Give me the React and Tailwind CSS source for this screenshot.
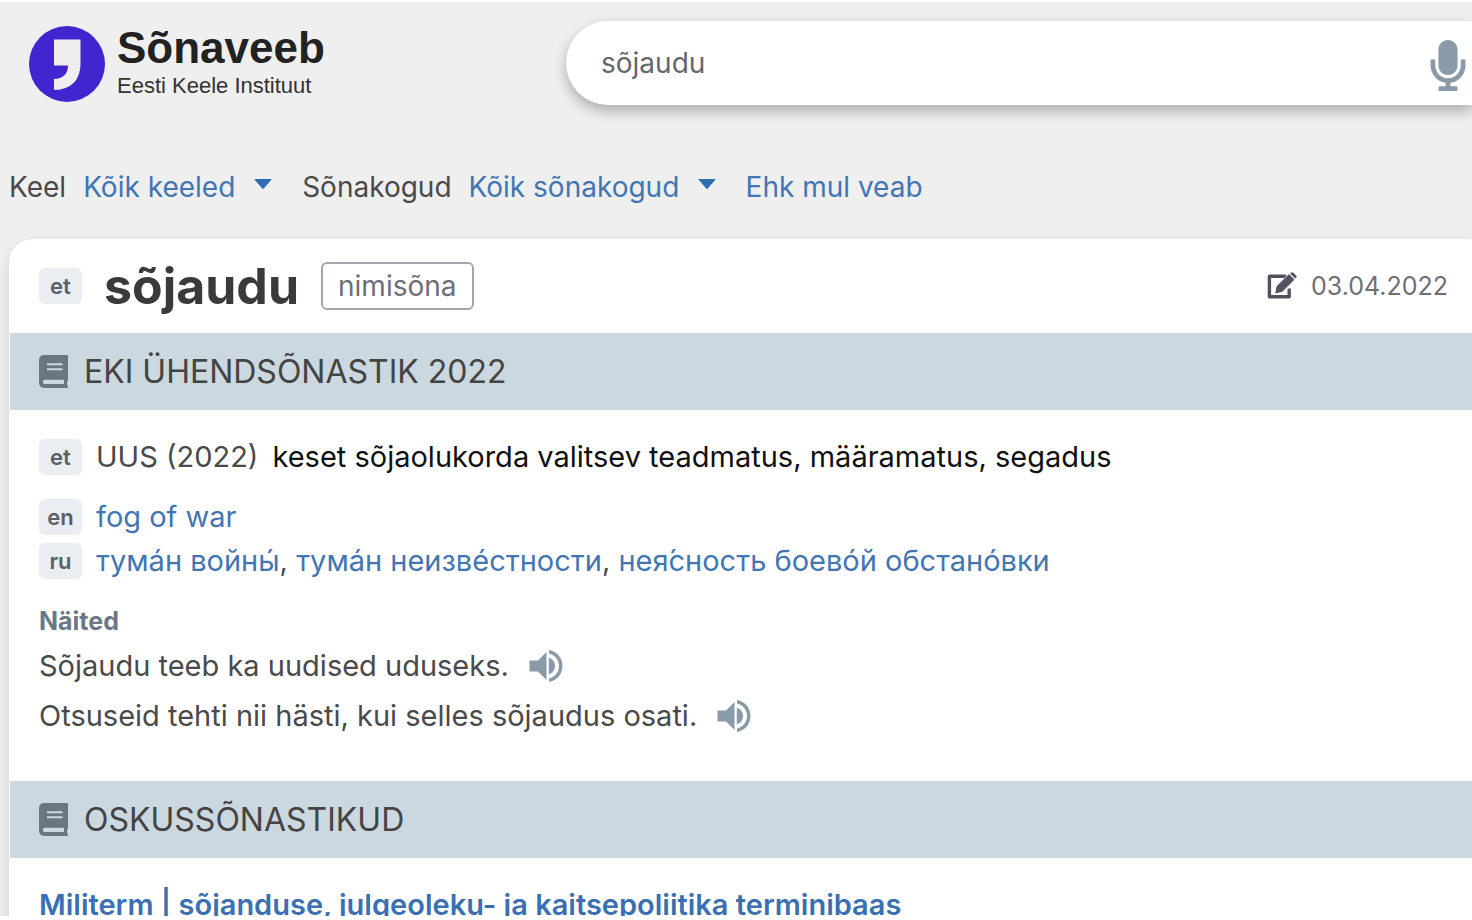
import { FaMicrophone } from "react-icons/fa";

function LangTag({ children }) {
  return (
    <span className="flex h-9 min-w-[43px] shrink-0 items-center justify-center rounded-md bg-[#eaedf1] px-2 text-[22px] leading-8 font-semibold text-[#5b5f68]">
      {children}
    </span>
  );
}

function Filter({ id, label, value }) {
  return (
    <div className="flex items-center gap-[17px]">
      <label htmlFor={id}>{label}</label>
      <div className="relative flex items-center">
        <select id={id} className="cursor-pointer appearance-none bg-transparent pr-9 text-[#4276b3]">
          <option>{value}</option>
        </select>
        <svg viewBox="0 0 18 10" className="pointer-events-none absolute top-3 right-0 h-[10px] w-[18px] fill-[#2f6db3]" aria-hidden="true">
          <path d="M1 0h16q1 0 .3.8L10 9.2q-1 1-2 0L.7.8Q0 0 1 0z" />
        </svg>
      </div>
    </div>
  );
}

function Band({ title }) {
  return (
    <div className="flex h-[77px] items-center gap-4 bg-[#ccd8e0] pl-[29px]">
      <svg viewBox="0 0 29 33" className="h-[33px] w-[29px]" aria-hidden="true">
        <path fill="#6a7680" d="M5.500 0H28q1 0 1 1v24.500q0 .8-.8 1.200-.5 1.800 0 3.600.8.400.8 1.200 0 1.500-1 1.500H6q-6 0-6-6V5.500Q0 0 5.500 0z" />
        <path fill="#ccd8e0" d="M8 8.200h15.500v2H8zM8 13.200h15.500v2H8zM6 24.700h19v4.300H6q-2.200 0-2.200-2.100T6 24.700z" />
      </svg>
      <h2 className="text-[32px] leading-10 font-normal text-[#444]">{title}</h2>
    </div>
  );
}

function Example({ text }) {
  return (
    <li className="flex h-[50px] items-center gap-5">
      <span>{text}</span>
      <button type="button" aria-label="Kuula" className="text-[#8a9aa9]">
        <svg viewBox="0 0 34 34" className="size-[34px] fill-current" aria-hidden="true">
          <path d="M.5 11.500h8.500L17.500 3v28L9 22.500H.5z" />
          <path d="M19.800 8.500c4 1.500 6.200 4.700 6.200 8.500s-2.200 7-6.200 8.500z" />
          <path d="M20 1c8 1.500 13.500 8 13.500 16S28 31.500 20 33v-3.500c6-1.500 10-6.500 10-12.500S26 6 20 4.500z" />
        </svg>
      </button>
    </li>
  );
}

function Link({ children }) {
  return <a href="#" className="text-[#4276b3]">{children}</a>;
}

export default function App() {
  return (
    <div className="flex h-screen flex-col overflow-hidden border-t-2 border-b-4 border-white bg-[#efefef] font-['Inter',sans-serif] text-[28px] leading-10 text-[#4a4a4a]">
      <header className="flex shrink-0 items-center pt-[19px] pl-[29px]">
        <a href="#" className="flex w-[537px] shrink-0 items-center gap-3 pt-[2px]">
          <svg viewBox="0 0 76 76" className="size-[76px] shrink-0" aria-hidden="true">
            <circle cx="38" cy="38" r="38" fill="#4325cf" />
            <path fill="#efefef" d="M25 13.500h26.500V37c0 17-9 26.500-26.500 27V53c9-.5 14-5 14-13.500H25z" />
          </svg>
          <span className="flex flex-col font-['Liberation_Sans',sans-serif]">
            <span className="text-[44px] leading-11 font-bold text-[#222]">Sõnaveeb</span>
            <span className="text-[22px] leading-8 text-[#333]">Eesti Keele Instituut</span>
          </span>
        </a>
        <form className="flex h-[84px] min-w-0 flex-1 items-center rounded-l-full bg-white pr-[6px] pl-[35px] shadow-[0_6px_14px_rgba(0,0,0,0.28)]">
          <input type="text" aria-label="Otsi" defaultValue="sõjaudu" className="min-w-0 flex-1 bg-transparent text-[#63676d] outline-none" />
          <button type="button" aria-label="Häälotsing" className="pt-1 text-[#8a9aa9]">
            <FaMicrophone className="h-[51px] w-[36px]" />
          </button>
        </form>
      </header>

      <nav className="mt-[62px] flex shrink-0 items-center gap-[30px] pl-[9px]">
        <Filter id="keel" label="Keel" value="Kõik keeled" />
        <Filter id="kogud" label="Sõnakogud" value="Kõik sõnakogud" />
        <Link>Ehk mul veab</Link>
      </nav>

      <main className="mt-8 ml-[9px] flex-1 rounded-tl-3xl bg-white pl-px shadow-[0_4px_12px_rgba(0,0,0,0.13)]">
        <div className="flex h-[94px] items-center pr-6 pl-[29px]">
          <LangTag>et</LangTag>
          <h1 className="ml-[22px] text-[50px] leading-[60px] font-bold text-[#3a3a3a]">sõjaudu</h1>
          <span className="ml-[22px] flex h-12 items-center rounded-md border-2 border-[#a3a7ad] px-[15px] text-[#6c6f78]">nimisõna</span>
          <svg viewBox="0 0 30 28" className="ml-auto h-7 w-[30px]" aria-hidden="true">
            <path d="M19 4.200H2.400v20.500h19.800V16.500" fill="none" stroke="#50535f" strokeWidth="3.400" strokeLinejoin="round" />
            <path d="M13.500 12L22 3.300l5 4.700-10.500 10.500z" fill="none" stroke="#fff" strokeWidth="3" />
            <path d="M8.800 20.800l1.400-6.600L22 2.600l5 5L15.200 19.300z" fill="#50535f" stroke="#50535f" strokeLinejoin="round" />
            <path d="M23.200 1.500l.8-.8q1.200-1 2.400 0l2.700 2.700q1 1.200 0 2.300l-.9.900z" fill="#50535f" />
          </svg>
          <time dateTime="2022-04-03" className="ml-[14px] text-[25px] text-[#6c6f78]">03.04.2022</time>
        </div>

        <Band title="EKI ÜHENDSÕNASTIK 2022" />
        <section className="px-[29px] pt-[27px] pb-10 text-[29px]">
          <p className="flex items-center gap-[14px]">
            <LangTag>et</LangTag>
            <span>UUS (2022)</span>
            <span className="text-[#111]">keset sõjaolukorda valitsev teadmatus, määramatus, segadus</span>
          </p>
          <div className="mt-5 flex flex-col gap-1">
            <p className="flex items-center gap-[14px]">
              <LangTag>en</LangTag>
              <Link>fog of war</Link>
            </p>
            <p className="flex items-center gap-[14px]">
              <LangTag>ru</LangTag>
              <span>
                <Link>тума́н войны́</Link>, <Link>тума́н неизве́стности</Link>, <Link>нея́сность боево́й обстано́вки</Link>
              </span>
            </p>
          </div>
          <h3 className="mt-5 text-[25px] font-bold text-[#6a7885]">Näited</h3>
          <ul>
            <Example text="Sõjaudu teeb ka uudised uduseks." />
            <Example text="Otsuseid tehti nii hästi, kui selles sõjaudus osati." />
          </ul>
        </section>

        <Band title="OSKUSSÕNASTIKUD" />
        <section className="px-[29px] pt-[27px] text-[29px]">
          <a href="#" className="font-semibold text-[#3a70b2]">Militerm | sõjanduse, julgeoleku- ja kaitsepoliitika terminibaas</a>
        </section>
      </main>
    </div>
  );
}
